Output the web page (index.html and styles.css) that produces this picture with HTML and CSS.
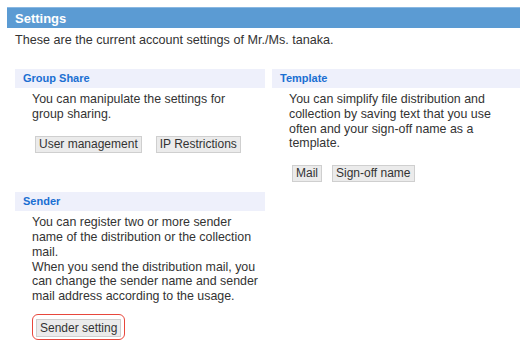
FILE: index.html
```html
<!DOCTYPE html>
<html lang="en">

<head>
	<meta charset="UTF-8">
	<meta name="viewport" content="width=device-width, initial-scale=1.0">
	<title>Settings</title>
	<link rel="stylesheet" href="styles.css">
</head>

<body>
	<div class="page">
		<h1 class="title">Settings</h1>
		<p class="lead">These are the current account settings of Mr./Ms. tanaka.</p>
		<div class="grid">
			<div class="section">
				<h2>Group Share</h2>
				<div class="body">
					<p>You can manipulate the settings for group sharing.</p>
					<div class="buttons">
						<button>User management</button>
						<button>IP Restrictions</button>
					</div>
				</div>
			</div>
			<div class="section">
				<h2>Template</h2>
				<div class="body">
					<p>You can simplify file distribution and collection by saving text that you use often and your sign-off name as a template.</p>
					<div class="buttons tight">
						<button>Mail</button>
						<button>Sign-off name</button>
					</div>
				</div>
			</div>
			<div class="section">
				<h2>Sender</h2>
				<div class="body">
					<p>You can register two or more sender name of the distribution or the collection mail.<br>When you send the distribution mail, you can change the sender name and sender mail address according to the usage.</p>
					<div class="buttons">
						<span class="highlight"><button>Sender setting</button></span>
					</div>
				</div>
			</div>
		</div>
	</div>
</body>

</html>
```

FILE: styles.css
```css
body {
	margin: 0;
	background-color: white;
	font-family: "Liberation Sans", Arial, sans-serif;
	color: #333;
}

.page {
	padding: 7px 10px 0 7px;
}

.title {
	margin: 0;
	height: 21px;
	line-height: 21px;
	padding-left: 8px;
	background-color: #5b9bd3;
	border-top: 1px solid #8ab8e2;
	box-sizing: border-box;
	color: white;
	font-size: 13px;
	font-weight: bold;
}

.lead {
	margin: 4px 0 0 8px;
	font-size: 12.6px;
	line-height: 16px;
}

.grid {
	display: grid;
	grid-template-columns: 250px 248px;
	column-gap: 7px;
	row-gap: 10px;
	margin: 21px 0 0 8px;
	align-items: start;
}

.section h2 {
	margin: 0;
	height: 19px;
	line-height: 19px;
	padding-left: 8px;
	background-color: #eef0fb;
	color: #1a6fd2;
	font-size: 11px;
	font-weight: bold;
}

.body {
	padding: 4px 7px 0 17px;
}

.body p {
	margin: 0;
	font-size: 12.4px;
	line-height: 14.8px;
}

.buttons {
	display: flex;
	gap: 11px;
	margin-top: 14px;
}

.buttons.tight {
	gap: 7px;
}

button {
	font-family: inherit;
	font-size: 12px;
	color: #333;
	background-color: #ebebeb;
	border: 1px solid #cfcfcf;
	padding: 0 3px;
	height: 17px;
	line-height: 15px;
	margin-left: 3px;
}

.highlight {
	display: inline-block;
	border: 1.5px solid #e8473c;
	border-radius: 6px;
	padding: 3px 3px 2px;
	margin-top: -4px;
}

.highlight button {
	margin-left: 0;
	height: 18px;
}
```
